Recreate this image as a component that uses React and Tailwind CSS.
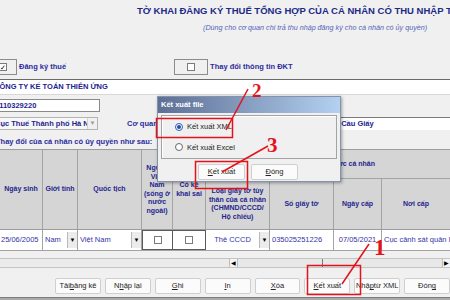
import React from 'react'

const F = { fontFamily: '"Liberation Sans", Arial, sans-serif' }

function Drop({ light }) {
  return (
    <div className={`w-[10px] h-full shrink-0 flex items-center justify-center text-[6px] border-l ${light ? 'bg-[#f0f0f0] border-[#d0d0d0] text-[#9a9a9a]' : 'bg-[#ececec] border-[#b8b8b8] text-black'}`}>
      ▼
    </div>
  )
}

function Box({ checked }) {
  return (
    <div className="w-[8px] h-[8px] bg-white border border-[#7a7a7a] flex items-center justify-center text-[7px] leading-none text-black">
      {checked ? '✓' : ''}
    </div>
  )
}

function Btn({ children, w = 'w-[47px]' }) {
  return (
    <div className={`${w} h-[16px] bg-[#fbfbfb] border border-[#cfcfcf] rounded-[2px] flex items-center justify-center text-[7.5px] text-[#222]`}>
      {children}
    </div>
  )
}

const hd = 'border-r border-[#a4a4a4] flex items-center justify-center text-center px-[1px]'
const cell = 'border-r border-[#a4a4a4] flex items-center h-full'

export default function App() {
  return (
    <div style={F} className="relative w-[450px] h-[300px] overflow-hidden bg-[#f0f0f0] flex flex-col pt-[4px]">
      {/* title */}
      <div className="h-[14px] pl-[137px] whitespace-nowrap text-[9.5px] font-bold text-[#1d2a86] flex items-center">
        TỜ KHAI ĐĂNG KÝ THUẾ TỔNG HỢP CỦA CÁ NHÂN CÓ THU NHẬP TỪ TIỀN LƯƠNG, TIỀN CÔNG
      </div>
      <div className="h-[12px] mt-[4px] pl-[203px] whitespace-nowrap text-[7.2px] italic text-[#5363b8] flex items-center">
        (Dùng cho cơ quan chi trả thu nhập đăng ký cho cá nhân có ủy quyền)
      </div>

      {/* checkboxes */}
      <div className="h-[16px] mt-[25px] flex items-center whitespace-nowrap">
        <div className="w-[17px] h-[16px] border border-[#8c8c8c] border-l-0 flex items-center">
          <div className="-ml-[1px]"><Box checked /></div>
        </div>
        <span className="ml-[2px] text-[7.5px] font-bold text-[#2b2b9d]">Đăng ký thuế</span>
        <div className="ml-[108px] w-[34px] h-[16px] border border-[#8c8c8c] flex items-center justify-center">
          <Box />
        </div>
        <span className="ml-[2px] text-[7.5px] font-bold text-[#2b2b9d]">Thay đổi thông tin ĐKT</span>
      </div>

      {/* company */}
      <div className="h-[16px] mt-[4px] bg-white border-t border-[#6a6a6a] border-b border-b-[#d8d8d8] flex items-center whitespace-nowrap overflow-hidden">
        <span className="-ml-[6px] text-[7.5px] font-bold text-[#23238f]">CÔNG TY KẾ TOÁN THIÊN ỨNG</span>
      </div>

      {/* MST */}
      <div className="h-[13px] mt-[4px] flex">
        <div className="w-[100px] h-full bg-white border border-[#8a8a8a] border-l-0 flex items-center whitespace-nowrap overflow-hidden">
          <span className="-ml-[5px] text-[7.5px] font-bold text-[#23238f]">0110329220</span>
        </div>
      </div>

      {/* co quan */}
      <div className="h-[13px] mt-[5px] flex items-center whitespace-nowrap">
        <div className="w-[98px] h-full bg-[#f7f7f7] border border-[#b4b4b4] border-l-0 flex items-center overflow-hidden">
          <div className="flex-1 min-w-0 h-full flex items-center overflow-hidden">
            <span className="-ml-[5px] text-[7.5px] font-bold text-[#23238f]">Cục Thuế Thành phố Hà Nội</span>
          </div>
          <Drop light />
        </div>
        <span className="ml-[29px] text-[7.5px] font-bold text-[#2b2b9d]">Cơ quan thuế</span>
        <div className="ml-auto w-[180px] h-full bg-white border-t border-[#7a7a7a] flex items-center pl-[2px] overflow-hidden">
          <span className="text-[7.5px] font-bold text-[#23238f]">Chi cục Thuế quận Cầu Giấy</span>
        </div>
      </div>

      {/* section label */}
      <div className="h-[11px] mt-[6px] flex items-center whitespace-nowrap">
        <span className="-ml-[4px] text-[7.5px] font-bold text-[#2b2b9d]">Thay đổi của cá nhân có ủy quyền như sau:</span>
      </div>

      {/* table header */}
      <div className="h-[81px] mt-[2px] flex bg-[#d5d5d5] border-t border-b border-[#9c9c9c] text-[7px] leading-[8.5px] font-bold text-[#25258f]">
        <div className={`w-[43px] ${hd}`}>Ngày sinh</div>
        <div className={`w-[35px] ${hd}`}>Giới tính</div>
        <div className={`w-[64px] ${hd}`}>Quốc tịch</div>
        <div className={`w-[31px] ${hd}`}>Người Việt Nam (sống ở nước ngoài)</div>
        <div className={`w-[33px] ${hd}`}>Có kê khai sai</div>
        <div className="flex-1 flex flex-col">
          <div className="h-[29px] border-b border-[#a4a4a4] flex items-center justify-center">Giấy tờ chứng thực cá nhân</div>
          <div className="flex flex-1">
            <div className={`w-[64px] ${hd}`}>Loại giấy tờ tùy thân của cá nhân (CHMND/CCCD/ Hộ chiếu)</div>
            <div className={`w-[64px] ${hd}`}>Số giấy tờ</div>
            <div className={`w-[48px] ${hd}`}>Ngày cấp</div>
            <div className="flex-1 flex items-center justify-center">Nơi cấp</div>
          </div>
        </div>
      </div>

      {/* data row */}
      <div className="h-[21px] flex bg-white border-b border-[#a4a4a4] text-[7.5px] text-[#3434a6] whitespace-nowrap">
        <div className={`w-[43px] ${cell} pl-[1px]`}>25/06/2005</div>
        <div className={`w-[35px] ${cell} py-[2px] pl-[2px]`}>
          <span className="flex-1">Nam</span>
          <Drop />
        </div>
        <div className={`w-[64px] ${cell} py-[2px] pl-[2px]`}>
          <span className="flex-1">Việt Nam</span>
          <Drop />
        </div>
        <div className="w-[31px] h-full border border-[#5a5a5a] flex items-center justify-center"><Box /></div>
        <div className="w-[33px] h-full border border-l-0 border-[#5a5a5a] flex items-center justify-center"><Box /></div>
        <div className={`w-[64px] ${cell} py-[2px]`}>
          <span className="flex-1 text-center">Thẻ CCCD</span>
          <Drop />
        </div>
        <div className={`w-[64px] ${cell} pl-[2px]`}>035025251226</div>
        <div className={`w-[48px] ${cell} justify-center`}>07/05/2021</div>
        <div className="flex-1 min-w-0 flex items-center pl-[2px] overflow-hidden">Cục cảnh sát quản lý hành chính</div>
      </div>

      <div className="h-[7px]" />

      {/* scrollbar */}
      <div className="h-[10px] flex border-t border-b border-[#c4c4c4]">
        <div className="w-[229px] bg-[#ebebeb]" />
        <div className="w-[9px] bg-[#f4f4f4] border-l border-r border-[#bdbdbd] flex items-center justify-center text-[6px] text-black">◀</div>
        <div className="flex-1 bg-[#e8e8e8] flex items-center">
          <div className="ml-[84px] w-[1px] h-[8px] bg-[#7a7a7a]" />
        </div>
        <div className="w-[8px] bg-[#f4f4f4] border-l border-[#bdbdbd] flex items-center justify-center text-[6px] text-black">▶</div>
      </div>

      <div className="h-[10px]" />

      {/* buttons */}
      <div className="h-[16px] flex gap-[4px] pl-[55px] whitespace-nowrap">
        <Btn>Tải <u>b</u>ảng kê</Btn>
        <Btn>N<u>h</u>ập lại</Btn>
        <Btn><u>G</u>hi</Btn>
        <Btn><u>I</u>n</Btn>
        <Btn><u>X</u>óa</Btn>
        <Btn><u>K</u>ết xuất</Btn>
        <Btn>Nhậ<u>p</u> từ XML</Btn>
        <Btn>Đón<u>g</u></Btn>
      </div>

      <div className="h-[3px]" />
      <div className="flex-1 bg-[#a9a9a9] border-t border-[#7d7d7d]" />

      {/* dialog */}
      <div className="absolute left-[157px] top-[96px] w-[184px] h-[86px] bg-[#f0f0f0] border border-[#8493ab] shadow-[1px_1px_3px_rgba(0,0,0,0.35)] flex flex-col">
        <div className="h-[16px] bg-gradient-to-r from-[#5d6f94] to-[#b4d1f1] flex items-center pl-[3px] text-[7.5px] font-bold text-white">
          Kết xuất file
        </div>
        <div className="mx-[3px] mt-[2px] h-[44px] border border-[#a3a3a3] shadow-[inset_1px_1px_0_#ffffff] flex flex-col justify-center gap-[9px] pl-[13px] text-[7.5px] text-[#222]">
          <div className="flex items-center gap-[4px]">
            <div className="w-[8px] h-[8px] rounded-full border border-[#2a5db0] bg-white flex items-center justify-center">
              <div className="w-[4px] h-[4px] rounded-full bg-[#1d4fa8]" />
            </div>
            Kết xuất XML
          </div>
          <div className="flex items-center gap-[4px]">
            <div className="w-[8px] h-[8px] rounded-full border border-[#6a6a6a] bg-white" />
            Kết xuất Excel
          </div>
        </div>
        <div className="flex gap-[6px] pl-[40px] mt-[5px]">
          <Btn><u>K</u>ết xuất</Btn>
          <Btn><u>Đ</u>óng</Btn>
        </div>
      </div>

      {/* annotations */}
      <svg className="absolute left-0 top-0 pointer-events-none" width="450" height="300">
        <g fill="none" stroke="#e3121b" strokeWidth="1.5">
          <rect x="156.5" y="118.5" width="76" height="19" />
          <rect x="195.5" y="161.5" width="52" height="27" />
          <rect x="307.5" y="265.5" width="53" height="29" />
          <line x1="226" y1="130" x2="248" y2="89" />
          <line x1="222" y1="172" x2="268" y2="146" />
          <line x1="369" y1="244" x2="342" y2="284" />
        </g>
      </svg>
      <span style={{ fontFamily: '"Liberation Serif", serif' }} className="absolute left-[252px] top-[81px] text-[19px] font-bold text-[#e3121b] leading-none">2</span>
      <span style={{ fontFamily: '"Liberation Serif", serif' }} className="absolute left-[267px] top-[135px] text-[21px] font-bold text-[#e3121b] leading-none">3</span>
      <span style={{ fontFamily: '"Liberation Serif", serif' }} className="absolute left-[374px] top-[236px] text-[23px] font-bold text-[#e3121b] leading-none">1</span>
    </div>
  )
}
